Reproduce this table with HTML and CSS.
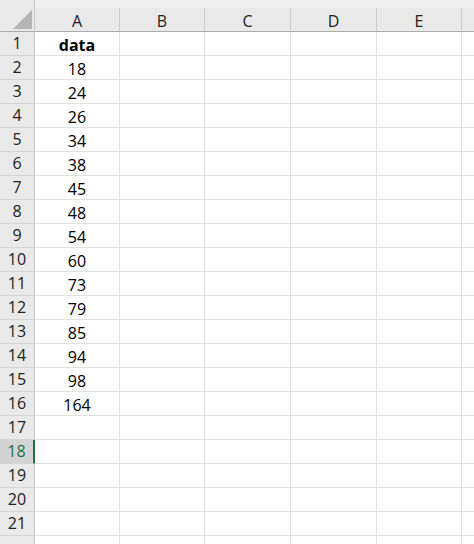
FILE: index.html
```html
<!DOCTYPE html>
<html>
<head>
<meta charset="utf-8">
<link rel="stylesheet" href="styles.css">
</head>
<body>
<div class="sheet">
  <div class="corner"><svg class="tri" width="19" height="19" viewBox="0 0 19 19"><polygon points="19,0 19,19 0,19" fill="#b4b4b4"/></svg></div>
  <div class="colh"><span>A</span></div>
  <div class="colh"><span>B</span></div>
  <div class="colh"><span>C</span></div>
  <div class="colh"><span>D</span></div>
  <div class="colh"><span>E</span></div>
  <div class="colh last"><span></span></div>

  <div class="rowh">1</div><div class="c bold">data</div><div class="c"></div><div class="c"></div><div class="c"></div><div class="c"></div><div class="c last"></div>
  <div class="rowh">2</div><div class="c">18</div><div class="c"></div><div class="c"></div><div class="c"></div><div class="c"></div><div class="c last"></div>
  <div class="rowh">3</div><div class="c">24</div><div class="c"></div><div class="c"></div><div class="c"></div><div class="c"></div><div class="c last"></div>
  <div class="rowh">4</div><div class="c">26</div><div class="c"></div><div class="c"></div><div class="c"></div><div class="c"></div><div class="c last"></div>
  <div class="rowh">5</div><div class="c">34</div><div class="c"></div><div class="c"></div><div class="c"></div><div class="c"></div><div class="c last"></div>
  <div class="rowh">6</div><div class="c">38</div><div class="c"></div><div class="c"></div><div class="c"></div><div class="c"></div><div class="c last"></div>
  <div class="rowh">7</div><div class="c">45</div><div class="c"></div><div class="c"></div><div class="c"></div><div class="c"></div><div class="c last"></div>
  <div class="rowh">8</div><div class="c">48</div><div class="c"></div><div class="c"></div><div class="c"></div><div class="c"></div><div class="c last"></div>
  <div class="rowh">9</div><div class="c">54</div><div class="c"></div><div class="c"></div><div class="c"></div><div class="c"></div><div class="c last"></div>
  <div class="rowh">10</div><div class="c">60</div><div class="c"></div><div class="c"></div><div class="c"></div><div class="c"></div><div class="c last"></div>
  <div class="rowh">11</div><div class="c">73</div><div class="c"></div><div class="c"></div><div class="c"></div><div class="c"></div><div class="c last"></div>
  <div class="rowh">12</div><div class="c">79</div><div class="c"></div><div class="c"></div><div class="c"></div><div class="c"></div><div class="c last"></div>
  <div class="rowh">13</div><div class="c">85</div><div class="c"></div><div class="c"></div><div class="c"></div><div class="c"></div><div class="c last"></div>
  <div class="rowh">14</div><div class="c">94</div><div class="c"></div><div class="c"></div><div class="c"></div><div class="c"></div><div class="c last"></div>
  <div class="rowh">15</div><div class="c">98</div><div class="c"></div><div class="c"></div><div class="c"></div><div class="c"></div><div class="c last"></div>
  <div class="rowh">16</div><div class="c">164</div><div class="c"></div><div class="c"></div><div class="c"></div><div class="c"></div><div class="c last"></div>
  <div class="rowh">17</div><div class="c"></div><div class="c"></div><div class="c"></div><div class="c"></div><div class="c"></div><div class="c last"></div>
  <div class="rowh active">18</div><div class="c"></div><div class="c"></div><div class="c"></div><div class="c"></div><div class="c"></div><div class="c last"></div>
  <div class="rowh">19</div><div class="c"></div><div class="c"></div><div class="c"></div><div class="c"></div><div class="c"></div><div class="c last"></div>
  <div class="rowh">20</div><div class="c"></div><div class="c"></div><div class="c"></div><div class="c"></div><div class="c"></div><div class="c last"></div>
  <div class="rowh">21</div><div class="c"></div><div class="c"></div><div class="c"></div><div class="c"></div><div class="c"></div><div class="c last"></div>
  <div class="rowh"></div><div class="c"></div><div class="c"></div><div class="c"></div><div class="c"></div><div class="c"></div><div class="c last"></div>
</div>
</body>
</html>
```

FILE: styles.css
```css
html, body {
  margin: 0;
  padding: 0;
  background: #ffffff;
  overflow: hidden;
}
.sheet {
  width: 474px;
  height: 544px;
  overflow: hidden;
  display: grid;
  grid-template-columns: 35px 85px 85px 86px 86px 85px 1fr;
  grid-template-rows: 32px repeat(22, 24px);
  font-family: "Open Sans", "Liberation Sans", sans-serif;
  font-size: 16px;
  color: #000;
}
.corner {
  box-sizing: border-box;
  background: #e9e9e9;
  border-right: 1px solid #c9c9c9;
  border-bottom: 1px solid #ababab;
  display: flex;
  align-items: flex-end;
  justify-content: flex-end;
  padding: 0 2px 2px 0;
}
.tri { display: block; }
.colh {
  box-sizing: border-box;
  background: #f0f0f0;
  border-bottom: 1px solid #ababab;
  padding-top: 8px;
  display: flex;
}
.colh span {
  flex: 1;
  box-sizing: border-box;
  background: #e9e9e9;
  border-right: 1px solid #cdcdcd;
  text-align: center;
  line-height: 26px;
  color: #222;
}
.colh.last span { border-right: none; }
.rowh {
  box-sizing: border-box;
  background: #e9e9e9;
  border-right: 1px solid #c9c9c9;
  border-bottom: 1px solid #d4d4d4;
  text-align: center;
  line-height: 22px;
  color: #222;
}
.rowh.active {
  background: #d3d3d3;
  color: #217346;
  border-right: 2px solid #217346;
}
.c {
  box-sizing: border-box;
  border-right: 1px solid #e1e1e1;
  border-bottom: 1px solid #e1e1e1;
  text-align: center;
  line-height: 26px;
}
.c.last { border-right: none; }
.bold { font-weight: 700; }
```
